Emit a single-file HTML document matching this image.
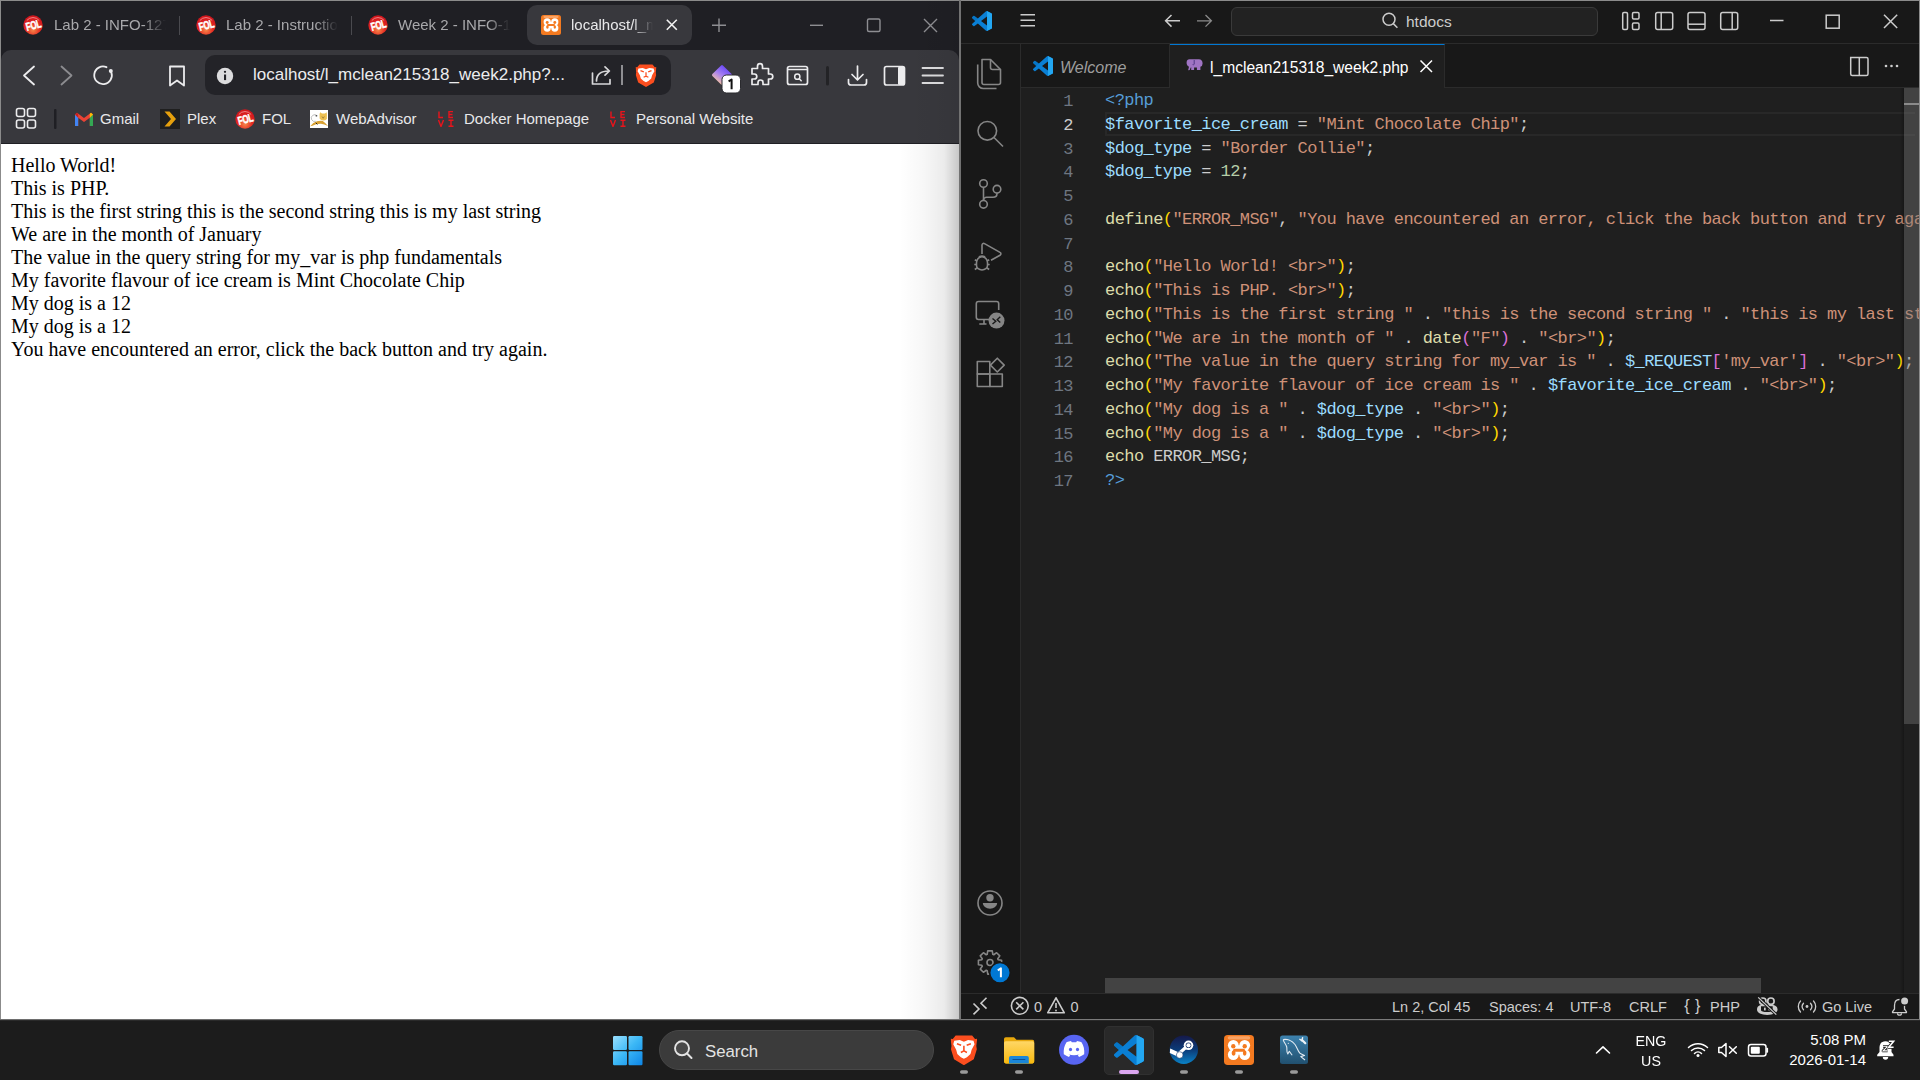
<!DOCTYPE html>
<html><head><meta charset="utf-8">
<style>
*{margin:0;padding:0;box-sizing:border-box}
html,body{width:1920px;height:1080px;overflow:hidden;background:#1c1c1c;font-family:"Liberation Sans",sans-serif}
.a{position:absolute}
svg{position:absolute;overflow:visible}
.t{position:absolute;white-space:nowrap}
/* browser */
#br{left:0;top:0;width:961px;height:1020px;background:#1f1f24;overflow:hidden}
#br .bt{color:#a8a8ab;font-size:15px}
#code .l{position:absolute;left:0;height:23.75px;line-height:23.75px;white-space:pre}
#code{font-family:"Liberation Mono",monospace;font-size:17px;letter-spacing:-0.575px;color:#cccccc}
.sb{font-size:14.5px;color:#cccccc}
.vsi{position:absolute}
.k{color:#569cd6}.v{color:#9cdcfe}.s{color:#ce9178}.n{color:#b5cea8}.f{color:#dcdcaa}.y{color:#ffd700}.p{color:#da70d6}
#gut .g{position:absolute;width:40px;text-align:right;height:23.75px;line-height:23.75px;font-family:"Liberation Mono",monospace;font-size:17px;letter-spacing:-0.575px;color:#6e7681}
</style></head><body>

<!-- ============ BROWSER ============ -->
<svg width="0" height="0" style="position:absolute">
<defs>
 <radialGradient id="folg" cx="50%" cy="75%" r="65%"><stop offset="0" stop-color="#f58a4a"/><stop offset="0.55" stop-color="#e52a22"/><stop offset="1" stop-color="#d0161c"/></radialGradient>
 <symbol id="fol" viewBox="0 0 20 20"><circle cx="10" cy="10" r="9.7" fill="url(#folg)"/><path d="M3.8 5.5 A8 8 0 0 1 16.2 5.5" stroke="#ffb0b0" stroke-width="1" fill="none" opacity=".7"/><g transform="rotate(-15 10 10)"><text x="0" y="0" font-family="Liberation Sans" font-weight="bold" font-size="11.5" fill="#fff" text-anchor="middle" letter-spacing="-.5" transform="translate(10.2 14.3) scale(.7 1)" stroke="#fff" stroke-width=".5">FOL</text></g></symbol>
 <symbol id="brave" viewBox="0 0 21 23.2" preserveAspectRatio="none"><path d="M4 0.7H17L19.3 3.4L21 3.2L20.3 8.7L20.7 11.2L18.3 18.7L10.5 23.2L2.7 18.7L0.3 11.2L0.7 8.7L0 3.2L1.7 3.4Z" fill="#fb4e1f"/><path d="M2.9 4.6L7.2 4.1L10.5 5.5L13.8 4.1L18.1 4.6L18.9 7.4L16.6 11.4L15.7 14.8L12.9 17.2L10.5 18.4L8.1 17.2L5.3 14.8L4.4 11.4L2.1 7.4Z" fill="#fff"/><path d="M5 6.9L8.3 8.1M16 6.9L12.7 8.1M10.5 8.5V12.3M8.1 13.5L10.5 12.3L12.9 13.5" fill="none" stroke="#fb4e1f" stroke-width="1.25"/></symbol>
 <symbol id="xampp" viewBox="0 0 20 20"><rect x="0" y="0" width="20" height="20" rx="2.5" fill="#f47a20"/><rect x="2.5" y="0.8" width="15" height="2.2" rx="1.1" fill="#fbb27c" opacity=".75"/><g fill="#fff"><circle cx="6.2" cy="6.9" r="3.6"/><circle cx="13.8" cy="6.9" r="3.6"/><circle cx="6.2" cy="13.1" r="3.6"/><circle cx="13.8" cy="13.1" r="3.6"/><rect x="6.2" y="6.9" width="7.6" height="6.2"/></g><g fill="#f47a20"><circle cx="6.2" cy="7.5" r="1.45"/><circle cx="13.8" cy="7.5" r="1.45"/><rect x="6" y="9.1" width="8" height="2" rx="1"/><ellipse cx="6.4" cy="12" rx="1.3" ry="1.8"/><ellipse cx="13.8" cy="12" rx="1.2" ry="1.8"/></g></symbol>
 <symbol id="levi" viewBox="0 0 18 16"><g fill="none" stroke="#e8141c" stroke-width="1.4"><path d="M2 0.5V6.5H6"/><path d="M16 0.5H12V6.5H16M12 3.5H15.5"/><path d="M1.5 9L4 15.5L6.5 9"/><path d="M11.5 9.2H16.5M14 9.2V15.2M11.5 15.2H16.5"/></g></symbol>
</defs>
</svg>
<div id="br" class="a">
  <!-- window border -->
  <div class="a" style="left:0;top:0;width:961px;height:1px;background:#8b8b8b"></div>
  <div class="a" style="left:0;top:0;width:1px;height:1020px;background:#8b8b8b"></div>
  <!-- tabs -->
  <svg style="left:23px;top:15px" width="20" height="20"><use href="#fol"/></svg>
  <div class="t bt" style="left:54px;top:16px;width:112px;overflow:hidden;-webkit-mask-image:linear-gradient(to right,#000 80%,transparent)">Lab 2 - INFO-127</div>
  <div class="a" style="left:179px;top:16px;width:1px;height:19px;background:#4a4a4f"></div>
  <svg style="left:196px;top:15px" width="20" height="20"><use href="#fol"/></svg>
  <div class="t bt" style="left:226px;top:16px;width:112px;overflow:hidden;-webkit-mask-image:linear-gradient(to right,#000 80%,transparent)">Lab 2 - Instructions</div>
  <div class="a" style="left:351px;top:16px;width:1px;height:19px;background:#4a4a4f"></div>
  <svg style="left:368px;top:15px" width="20" height="20"><use href="#fol"/></svg>
  <div class="t bt" style="left:398px;top:16px;width:112px;overflow:hidden;-webkit-mask-image:linear-gradient(to right,#000 80%,transparent)">Week 2 - INFO-1271</div>
  <div class="a" style="left:527px;top:5px;width:165px;height:40px;border-radius:10px;background:#38383d"></div>
  <svg style="left:541px;top:15px" width="20" height="20"><use href="#xampp"/></svg>
  <div class="t bt" style="left:571px;top:16px;width:82px;overflow:hidden;color:#e8e8ea;-webkit-mask-image:linear-gradient(to right,#000 75%,transparent)">localhost/l_mclean</div>
  <svg style="left:0;top:0" width="961" height="50">
    <g stroke="#f2f2f2" stroke-width="1.6" fill="none"><path d="M666.8 19.8L676.8 29.8M676.8 19.8L666.8 29.8"/></g>
    <g stroke="#8e8e92" stroke-width="1.4" fill="none">
      <path d="M719 18.5V32M712 25.2H726"/>
      <path d="M810 25.3H823"/>
      <rect x="867.5" y="19" width="12.5" height="12.5" rx="1.5"/>
      <path d="M924 19L937 32M937 19L924 32"/>
    </g>
  </svg>

  <!-- toolbar -->
  <div class="a" style="left:1px;top:50px;width:958px;height:93px;background:#38383d;border-radius:10px 10px 0 0"></div>
  <div class="a" style="left:205px;top:55px;width:466px;height:40px;border-radius:10px;background:#232328"></div>
  <div class="t" style="left:253px;top:65px;font-size:17px;color:#ececee">localhost/l_mclean215318_week2.php?...</div>
  <svg style="left:0;top:50px" width="961" height="94">
   <g transform="translate(0,-50)">
    <g fill="none" stroke-linecap="round" stroke-linejoin="round">
      <path d="M34 66.5L24 75.5L34 84.5" stroke="#ececee" stroke-width="1.8"/>
      <path d="M61.5 66.5L71.5 75.5L61.5 84.5" stroke="#8c8c90" stroke-width="1.8"/>
      <path d="M111.2 72 A8.8 8.8 0 1 1 106.5 67.2" stroke="#ececee" stroke-width="1.8"/>
      <path d="M170 66.5H184V85.5L177 80.5L170 85.5Z" stroke="#ececee" stroke-width="1.8"/>
      <path d="M592.5 73V84H610V79.5" stroke="#d8d8da" stroke-width="1.7"/>
      <path d="M596.5 81C596.5 75 600.5 71 609 71M605 66.8L609.4 71L605 75.2" stroke="#d8d8da" stroke-width="1.7"/>
      <path d="M757.5 68.5V66.2A2.5 2.5 0 0 1 762.5 66.2V68.5H768.5V74H770.3A2.5 2.5 0 0 1 770.3 79H768.5V84.5H763V82.5A2.5 2.5 0 0 0 758 82.5V84.5H752V79H754.3A2.5 2.5 0 0 0 754.3 74H752V68.5Z" stroke="#ececee" stroke-width="1.7"/>
      <rect x="787.5" y="66.5" width="20" height="18" rx="2" stroke="#ececee" stroke-width="1.7"/>
      <path d="M788 69.5H807" stroke="#ececee" stroke-width="1.5"/>
      <circle cx="797.3" cy="76.7" r="2.6" stroke="#ececee" stroke-width="1.5"/>
      <path d="M799.3 78.8L801.2 80.8" stroke="#ececee" stroke-width="1.5"/>
      <path d="M857.5 66V79.5M852 74.5L857.5 80L863 74.5M848.5 79.5V82.5A2.5 2.5 0 0 0 851 85H864A2.5 2.5 0 0 0 866.5 82.5V79.5" stroke="#ececee" stroke-width="1.7"/>
      <rect x="884.5" y="66.5" width="20" height="18.5" rx="2" stroke="#ececee" stroke-width="1.7"/>
      <path d="M922.5 68H943M922.5 75.5H943M922.5 83H943" stroke="#dcdcde" stroke-width="1.8"/>
    </g>
    <circle cx="110.8" cy="71" r="2" fill="#ececee"/>
    <rect x="898" y="66.5" width="7" height="18.5" rx="1.5" fill="#ececee"/>
    <circle cx="225" cy="76" r="8.2" fill="#dcdcde"/>
    <rect x="224" y="74.5" width="2.1" height="5.6" fill="#232328"/><circle cx="225" cy="71.8" r="1.15" fill="#232328"/>
    <rect x="621" y="65" width="2" height="20" fill="#8e8e92"/>
    <rect x="826" y="66" width="3" height="19.5" rx="1.5" fill="#232326"/>
    <!-- brave lion -->
    <use href="#brave" x="635.5" y="63.8" width="21" height="23.2"/>
    <!-- leo -->
    <defs><linearGradient id="leog" gradientUnits="userSpaceOnUse" x1="726" y1="67" x2="716" y2="82"><stop offset="0" stop-color="#6a48f8"/><stop offset="0.5" stop-color="#a67ff0"/><stop offset="1" stop-color="#f6c4a4"/></linearGradient></defs>
    <path d="M722 66.3L730.7 75L722 83.7L713.3 75Z" fill="url(#leog)" stroke="url(#leog)" stroke-width="2.6" stroke-linejoin="round"/>
    <rect x="722" y="75" width="18.5" height="18" rx="4.5" fill="#ffffff" stroke="#2a2a2e" stroke-width="1"/>
    <path d="M728.6 81.3L731.6 79.5V89.2" fill="none" stroke="#111" stroke-width="2" stroke-linejoin="round"/>
    <!-- bookmarks -->
    <g fill="none" stroke="#ececee" stroke-width="1.6">
      <rect x="16.5" y="108.5" width="8" height="8" rx="2"/><rect x="27.5" y="108.5" width="8" height="8" rx="2"/>
      <rect x="16.5" y="120" width="8" height="8" rx="2"/><rect x="27.5" y="120" width="8" height="8" rx="2"/>
    </g>
    <rect x="54" y="109" width="2.5" height="20" rx="1" fill="#1f1f24"/>
    <!-- gmail -->
    <path d="M75 114.5V126H78.2V117.7L84 122L89.8 117.7V126H93V114.5L91 112.8L84 118L77 112.8Z" fill="#ea4335"/>
    <path d="M75 114.5V126H78.2V117.7Z" fill="#4285f4"/><path d="M89.8 117.7V126H93V114.5Z" fill="#34a853"/>
    <path d="M89.8 117.7L93 114.5L91 112.8L89.8 113.8Z" fill="#fbbc04"/><path d="M75 114.5L77 112.8L78.2 113.8V117.7Z" fill="#c5221f"/>
    <!-- plex -->
    <rect x="160" y="109" width="20" height="20" fill="#1f1f1f"/>
    <path d="M164.5 111.5H169.5L176 119L169.5 126.5H164.5L171 119Z" fill="#e5a00d"/>
    <!-- tomcat -->
    <rect x="310" y="110" width="18" height="18" fill="#ffffff"/>
    <g transform="translate(310 110)">
      <path d="M5.8 11.3A3.4 3.4 0 1 1 7.2 5.8" fill="none" stroke="#b8b8b8" stroke-width=".9"/>
      <path d="M0.2 16.2Q3 12.3 7 11.2Q10 10.4 12.8 10.9Q15.3 12.6 18 16Q14 14 11 13.8Q6 13.6 2.5 15.8Z" fill="#d9a132"/>
      <path d="M9.6 3.9L10.2 2.2L12 3.4H15L16.6 2.2L16.9 4.2V9Q15.6 10.6 13.3 10.6Q10.6 10.4 9.6 8.6Z" fill="#ecc052"/>
      <path d="M12 6.5L13.2 8.3L14.3 6.5" fill="none" stroke="#8a6a2a" stroke-width=".7"/>
      <ellipse cx="6.4" cy="5.8" rx="1" ry=".65" fill="#222"/>
      <path d="M5.8 12.8L7.4 14.4" stroke="#222" stroke-width="1"/>
    </g>
  </g>
  </svg>
  <svg style="left:235px;top:109px" width="20" height="20"><use href="#fol"/></svg>
  <svg style="left:437px;top:111px" width="18" height="16"><use href="#levi"/></svg>
  <svg style="left:609px;top:111px" width="18" height="16"><use href="#levi"/></svg>

  <!-- bookmarks text -->
  <div class="t bt" style="left:100px;top:109.5px;color:#e8e8ea">Gmail</div>
  <div class="t bt" style="left:187px;top:109.5px;color:#e8e8ea">Plex</div>
  <div class="t bt" style="left:262px;top:109.5px;color:#e8e8ea">FOL</div>
  <div class="t bt" style="left:336px;top:109.5px;color:#e8e8ea">WebAdvisor</div>
  <div class="t bt" style="left:464px;top:109.5px;color:#e8e8ea">Docker Homepage</div>
  <div class="t bt" style="left:636px;top:109.5px;color:#e8e8ea">Personal Website</div>

  <!-- content -->
  <div class="a" style="left:1px;top:143px;width:958px;height:1px;background:#1f1f24"></div>
  <div class="a" style="left:1px;top:144px;width:958px;height:876px;background:#fff"></div>
  <div class="a" style="left:900px;top:0;width:59px;height:144px;background:linear-gradient(to right,rgba(0,0,0,0),rgba(0,0,0,.01) 40%,rgba(0,0,0,.03) 75%,rgba(0,0,0,.06))"></div>
  <div class="a" style="left:900px;top:144px;width:59px;height:875px;background:linear-gradient(to right,rgba(0,0,0,0),rgba(0,0,0,.03) 40%,rgba(0,0,0,.08) 75%,rgba(0,0,0,.22))"></div>
  <div class="a" style="left:959px;top:0;width:2px;height:1020px;background:#727272"></div>
  <div class="a" style="left:0;top:1019px;width:961px;height:1px;background:#6e6e6e"></div>
  <div class="a" id="pg" style="left:11px;top:154px;font-family:'Liberation Serif',serif;font-size:20px;line-height:23px;color:#000;white-space:nowrap">Hello World!<br>This is PHP.<br>This is the first string this is the second string this is my last string<br>We are in the month of January<br>The value in the query string for my_var is php fundamentals<br>My favorite flavour of ice cream is Mint Chocolate Chip<br>My dog is a 12<br>My dog is a 12<br>You have encountered an error, click the back button and try again.</div>
</div>

<!-- ============ VS CODE ============ -->
<div id="vs" class="a" style="left:961px;top:0;width:959px;height:1020px;background:#181818;overflow:hidden">
  <div class="a" style="left:0;top:0;width:959px;height:1px;background:#8b8b8b"></div>
  <div class="a" style="left:958px;top:0;width:1px;height:1020px;background:#8b8b8b"></div>
  <div class="a" style="left:0;top:1019px;width:959px;height:1px;background:#7a7a7a"></div>
  <!-- title bar bottom border -->
  <div class="a" style="left:0;top:43px;width:958px;height:1px;background:#2b2b2b"></div>
  <!-- command center -->
  <div class="a" style="left:270px;top:7px;width:367px;height:29px;border-radius:6px;background:#222222;border:1px solid #3a3a3a"></div>
  <div class="t" style="left:445px;top:12.5px;font-size:15.5px;color:#cccccc">htdocs</div>
  <!-- activity bar border -->
  <div class="a" style="left:59px;top:44px;width:1px;height:950px;background:#2b2b2b"></div>
  <!-- tabs -->
  <div class="a" style="left:60px;top:86.5px;width:898px;height:1px;background:#2b2b2b"></div>
  <div class="a" style="left:209px;top:44px;width:275px;height:44px;background:#1f1f1f;border-top:1.5px solid #0078d4;border-right:1px solid #2b2b2b"></div>
  <div class="a" style="left:208px;top:44px;width:1px;height:44px;background:#2b2b2b"></div>
  <div class="t" style="left:99px;top:58.5px;font-size:16px;color:#9d9d9d;font-style:italic">Welcome</div>
  <div class="t" style="left:249px;top:58.5px;font-size:15.6px;color:#ffffff">l_mclean215318_week2.php</div>
  <!-- editor -->
  <div class="a" style="left:60px;top:88px;width:898px;height:905px;background:#1f1f1f"></div>
  <!-- current line -->
  <div class="a" style="left:144px;top:112px;width:810px;height:24px;border:2px solid #282828;border-right:none"></div>
  <div id="gut" class="a" style="left:72px;top:90px">
    <div class="g" style="top:0">1</div>
    <div class="g" style="top:23.75px;color:#cccccc">2</div>
    <div class="g" style="top:47.5px">3</div>
    <div class="g" style="top:71.25px">4</div>
    <div class="g" style="top:95px">5</div>
    <div class="g" style="top:118.75px">6</div>
    <div class="g" style="top:142.5px">7</div>
    <div class="g" style="top:166.25px">8</div>
    <div class="g" style="top:190px">9</div>
    <div class="g" style="top:213.75px">10</div>
    <div class="g" style="top:237.5px">11</div>
    <div class="g" style="top:261.25px">12</div>
    <div class="g" style="top:285px">13</div>
    <div class="g" style="top:308.75px">14</div>
    <div class="g" style="top:332.5px">15</div>
    <div class="g" style="top:356.25px">16</div>
    <div class="g" style="top:380px">17</div>
  </div>
  <div id="code" class="a" style="left:144px;top:89px;width:814px;height:885px;overflow:hidden">
<div class="l" style="top:0"><span class="k">&lt;?php</span></div>
<div class="l" style="top:23.75px"><span class="v">$favorite_ice_cream</span> = <span class="s">"Mint Chocolate Chip"</span>;</div>
<div class="l" style="top:47.5px"><span class="v">$dog_type</span> = <span class="s">"Border Collie"</span>;</div>
<div class="l" style="top:71.25px"><span class="v">$dog_type</span> = <span class="n">12</span>;</div>
<div class="l" style="top:118.75px"><span class="f">define</span><span class="y">(</span><span class="s">"ERROR_MSG"</span>, <span class="s">"You have encountered an error, click the back button and try again."</span><span class="y">)</span>;</div>
<div class="l" style="top:166.25px"><span class="f">echo</span><span class="y">(</span><span class="s">"Hello World! &lt;br&gt;"</span><span class="y">)</span>;</div>
<div class="l" style="top:190px"><span class="f">echo</span><span class="y">(</span><span class="s">"This is PHP. &lt;br&gt;"</span><span class="y">)</span>;</div>
<div class="l" style="top:213.75px"><span class="f">echo</span><span class="y">(</span><span class="s">"This is the first string "</span> . <span class="s">"this is the second string "</span> . <span class="s">"this is my last string"</span><span class="y">)</span>;</div>
<div class="l" style="top:237.5px"><span class="f">echo</span><span class="y">(</span><span class="s">"We are in the month of "</span> . <span class="f">date</span><span class="p">(</span><span class="s">"F"</span><span class="p">)</span> . <span class="s">"&lt;br&gt;"</span><span class="y">)</span>;</div>
<div class="l" style="top:261.25px"><span class="f">echo</span><span class="y">(</span><span class="s">"The value in the query string for my_var is "</span> . <span class="v">$_REQUEST</span><span class="p">[</span><span class="s">'my_var'</span><span class="p">]</span> . <span class="s">"&lt;br&gt;"</span><span class="y">)</span>;</div>
<div class="l" style="top:285px"><span class="f">echo</span><span class="y">(</span><span class="s">"My favorite flavour of ice cream is "</span> . <span class="v">$favorite_ice_cream</span> . <span class="s">"&lt;br&gt;"</span><span class="y">)</span>;</div>
<div class="l" style="top:308.75px"><span class="f">echo</span><span class="y">(</span><span class="s">"My dog is a "</span> . <span class="v">$dog_type</span> . <span class="s">"&lt;br&gt;"</span><span class="y">)</span>;</div>
<div class="l" style="top:332.5px"><span class="f">echo</span><span class="y">(</span><span class="s">"My dog is a "</span> . <span class="v">$dog_type</span> . <span class="s">"&lt;br&gt;"</span><span class="y">)</span>;</div>
<div class="l" style="top:356.25px"><span class="f">echo</span> ERROR_MSG;</div>
<div class="l" style="top:380px"><span class="k">?&gt;</span></div>
  </div>
  <!-- scrollbars -->
  <div class="a" style="left:939px;top:88px;width:4px;height:905px;background:linear-gradient(to right,rgba(0,0,0,0),rgba(0,0,0,.28))"></div>
  <div class="a" style="left:943px;top:88px;width:15px;height:636px;background:rgba(121,121,121,.4)"></div>
  <div class="a" style="left:943px;top:103px;width:15px;height:2px;background:#8a8a8a"></div>
  <div class="a" style="left:144px;top:978px;width:656px;height:15px;background:#434343"></div>
  <!-- status bar -->
  <div class="a" style="left:0;top:993px;width:958px;height:1px;background:#2b2b2b"></div>
  <div class="t sb" style="left:73px;top:999px">0</div>
  <div class="t sb" style="left:109.5px;top:999px">0</div>
  <div class="t sb" style="left:431px;top:999px">Ln 2, Col 45</div>
  <div class="t sb" style="left:528px;top:999px">Spaces: 4</div>
  <div class="t sb" style="left:609px;top:999px">UTF-8</div>
  <div class="t sb" style="left:668px;top:999px">CRLF</div>
  <div class="t sb" style="left:749px;top:999px">PHP</div>
  <div class="t sb" style="left:861px;top:999px">Go Live</div>
</div>
<svg class="vsi" style="left:0;top:0" width="1920" height="1080">
  <defs>
    <symbol id="vsl" viewBox="0 0 100 100"><path fill="#0a7fd4" d="M96.46 10.8L75.86.87a6.23 6.23 0 0 0-7.1 1.21L29.33 38.04 12.16 25.01a4.16 4.16 0 0 0-5.32.24L1.33 30.26a4.16 4.16 0 0 0 0 6.16L16.22 50 1.33 63.58a4.16 4.16 0 0 0 0 6.16l5.51 5.01a4.16 4.16 0 0 0 5.320.24l17.17-13.03 39.43 35.96a6.23 6.23 0 0 0 7.1 1.21l20.6-9.92a6.25 6.25 0 0 0 3.54-5.63V16.43a6.25 6.25 0 0 0-3.54-5.63zM75.01 72.7L45.09 50l29.92-22.7v45.4z"/><path fill="#23a7f2" d="M75.2 0.4L96.46 10.8A6.25 6.25 0 0 1 100 16.43V83.57A6.25 6.25 0 0 1 96.46 89.2L75.2 99.6Z"/><path fill="#0065a9" opacity=".35" d="M29.33 38.04L12.16 25.01a4.16 4.16 0 0 0-5.32.24L1.33 30.26a4.16 4.16 0 0 0 0 6.16L16.22 50Z"/></symbol>
  </defs>
  <!-- title bar -->
  <use href="#vsl" x="972" y="11" width="20" height="20"/>
  <g fill="none" stroke="#cccccc" stroke-width="1.5">
    <path d="M1020.5 14.8H1035M1020.5 20.3H1035M1020.5 25.8H1035"/>
    <path d="M1171.5 15L1165.6 20.8L1171.5 26.6M1165.8 20.8H1180"/>
    <circle cx="1389" cy="19.3" r="6"/><path d="M1393.3 23.6L1397.4 27.7"/>
    <rect x="1622.7" y="12.5" width="4.8" height="17" rx="1.2"/><rect x="1632.5" y="12.5" width="6.5" height="6.5" rx="1.2"/><rect x="1632.5" y="23" width="6.5" height="6.5" rx="1.2"/>
    <rect x="1655.7" y="12.5" width="17" height="17" rx="2"/><path d="M1661.2 12.5V29.5"/>
    <rect x="1688" y="12.5" width="17" height="17" rx="2"/><path d="M1688 24.2H1705"/>
    <rect x="1720.7" y="12.5" width="17" height="17" rx="2"/><path d="M1732.2 12.5V29.5"/>
    <path d="M1770 20.5H1783.5"/>
    <rect x="1826.2" y="15.2" width="13" height="13"/>
    <path d="M1884 14.8L1897.2 28M1897.2 14.8L1884 28"/>
    <path d="M1850.7 57.5H1866.5A1.5 1.5 0 0 1 1868 59V74A1.5 1.5 0 0 1 1866.5 75.5H1852.2A1.5 1.5 0 0 1 1850.7 74Z"/><path d="M1859.3 57.5V75.5"/>
  </g>
  <path d="M1197 20.8H1211.5M1205.5 15L1211.4 20.8L1205.5 26.6" fill="none" stroke="#8b8b8b" stroke-width="1.3"/>
  <g fill="#cccccc"><circle cx="1886" cy="66" r="1.3"/><circle cx="1891.5" cy="66" r="1.3"/><circle cx="1897" cy="66" r="1.3"/></g>
  <!-- tabs -->
  <use href="#vsl" x="1033" y="56" width="20" height="20"/>
  <path d="M1420.5 60.5L1432 72M1432 60.5L1420.5 72" stroke="#ffffff" stroke-width="1.5" fill="none"/>
  <path fill="#a074c4" d="M1186.6 62.2Q1186.8 59.4 1189.5 59.3H1198.8Q1202.6 59.5 1202.6 63.6Q1202.6 66.2 1200.4 66.8V70.1H1196.9V67.6H1194.1V70.1H1191.2V67.3Q1190.5 67.5 1190.3 68.5L1190 69.6Q1189.3 70.6 1188.2 70L1189 66.8Q1186.4 65.5 1186.6 62.2Z"/>
  <path d="M1194.2 60V64.3Q1193.8 65 1192.6 64.6" stroke="#4a3280" stroke-width="0.9" fill="none"/>
  <!-- activity bar -->
  <g fill="none" stroke="#868686" stroke-width="1.6" stroke-linejoin="round">
    <path d="M982 59.5H990.5L1000.5 69.5V82.5A2 2 0 0 1 998.5 84.5H984A2 2 0 0 1 982 82.5Z"/><path d="M990.5 59.5V67.5A2 2 0 0 0 992.5 69.5H1000.5"/>
    <path d="M977.7 64.5V83A5.5 5.5 0 0 0 983.2 88.5H996.5"/>
    <circle cx="987.3" cy="130.8" r="9.3"/><path d="M994 137.5L1003 146.5"/>
    <circle cx="983.5" cy="183.5" r="3.8"/><circle cx="983.5" cy="204.3" r="3.8"/><circle cx="997" cy="189.2" r="3.8"/>
    <path d="M983.5 187.3V200.5"/><path d="M997 193V193.5C997 196 995.5 197.3 993 197.3H986.5C985 197.3 983.5 198.5 983.5 200"/>
    <path d="M982 254V245.2C982 243.8 983.3 243 984.5 243.6L1000 252.4C1001.2 253 1001.2 254.5 1000 255.2L991 260.3"/>
    <path d="M976.5 262.8A5.5 6 0 0 1 987.5 262.8V265.5A5.5 4.5 0 0 1 976.5 265.5Z"/>
    <path d="M979 257.5C979.5 255.5 984.5 255.5 985 257.5M974.8 259.7L977 261M989.2 259.7L987 261M974.3 264.5H976.5M987.5 264.5H989.7M974.8 269.5L977 268M989.2 269.5L987 268"/>
    <path d="M989 319.5H978.5A2.2 2.2 0 0 1 976.3 317.3V303.7A2.2 2.2 0 0 1 978.5 301.5H996.5A2.2 2.2 0 0 1 998.7 303.7V310"/><path d="M984 320V323.7M979.3 324H986.5"/>
    <rect x="977.3" y="361.5" width="12.5" height="12.5"/><rect x="977.3" y="374" width="12.5" height="12.5"/><rect x="989.8" y="374" width="12.5" height="12.5"/>
    <path d="M997.3 358.2L1004.2 365.1L997.3 372L990.4 365.1Z"/>
    <circle cx="990" cy="903" r="12"/>
    <path stroke-linejoin="round" d="M998.13 959.70 L1001.58 960.25 L1001.58 964.75 L998.13 965.30 L997.73 966.27 L999.78 969.10 L996.60 972.28 L993.77 970.23 L992.80 970.63 L992.25 974.08 L987.75 974.08 L987.20 970.63 L986.23 970.23 L983.40 972.28 L980.22 969.10 L982.27 966.27 L981.87 965.30 L978.42 964.75 L978.42 960.25 L981.87 959.70 L982.27 958.73 L980.22 955.90 L983.40 952.72 L986.23 954.77 L987.20 954.37 L987.75 950.92 L992.25 950.92 L992.80 954.37 L993.77 954.77 L996.60 952.72 L999.78 955.90 L997.73 958.73Z"/>
    <circle cx="990" cy="962.5" r="3"/>
  </g>
  <circle cx="996.5" cy="320.6" r="8" fill="#868686"/>
  <path d="M992.5 318.5L995.8 321.2L992.5 324M1000.3 316.8L997.2 319.7L1000.3 322.5" stroke="#181818" stroke-width="1.4" fill="none"/>
  <g fill="#868686"><circle cx="990" cy="897.8" r="3.7"/><path d="M982.8 903H997.2A7.2 5.8 0 0 1 982.8 903Z"/></g>
  <circle cx="1000" cy="972.7" r="10.3" fill="#0078d4" stroke="#181818" stroke-width="1.5"/>
  <path d="M997.8 970.3L1000.9 968.3V977.3" fill="none" stroke="#fff" stroke-width="2" stroke-linejoin="round"/>
  <!-- status bar -->
  <g fill="none" stroke="#cccccc" stroke-width="1.6">
    <path d="M973.5 1003.5L979 1009L973.5 1014.3M986.5 997.8L981 1003.2L986.5 1008.6"/>
    <circle cx="1019.8" cy="1005.8" r="8.4"/><path d="M1016.2 1002.2L1023.4 1009.4M1023.4 1002.2L1016.2 1009.4"/>
    <path d="M1056 997.8L1064.3 1012.8H1047.7Z" stroke-linejoin="round"/><path d="M1056 1003V1008"/>
  </g>
  <circle cx="1056" cy="1010.5" r=".9" fill="#cccccc"/>
  <text x="1684.2" y="1011.3" font-family="Liberation Sans" font-size="16" fill="#cccccc">{</text>
  <text x="1695" y="1011.3" font-family="Liberation Sans" font-size="16" fill="#cccccc">}</text>
  <!-- copilot off -->
  <path d="M1757 1009.6C1757 1005.6 1760 1004.6 1767 1004.6C1774 1004.6 1777.5 1005.6 1777.5 1009.6C1777.5 1013 1773 1015 1767.2 1015C1761.4 1015 1757 1013 1757 1009.6Z" fill="#cccccc"/>
  <circle cx="1762.8" cy="1001.2" r="3.2" fill="#181818" stroke="#cccccc" stroke-width="1.7"/>
  <circle cx="1770.9" cy="1001.2" r="3.2" fill="#181818" stroke="#cccccc" stroke-width="1.7"/>
  <path d="M1761 1006.3H1772.7V1010C1772.7 1011.5 1770 1012 1766.8 1012C1763.6 1012 1761 1011.5 1761 1010Z" fill="#181818"/>
  <rect x="1764" y="1007.6" width="1.7" height="2.8" fill="#cccccc"/><rect x="1768.4" y="1007.6" width="1.7" height="2.8" fill="#cccccc"/>
  <path d="M1758.2 997.4L1776.3 1014.6" stroke="#181818" stroke-width="3"/>
  <path d="M1758.2 997.4L1776.3 1014.6" stroke="#cccccc" stroke-width="1.3"/>
  <!-- broadcast -->
  <g fill="none" stroke="#cccccc" stroke-width="1.3" stroke-linecap="round">
    <path d="M1800.5 1001A8 8 0 0 0 1800.5 1012M1813.5 1001A8 8 0 0 1 1813.5 1012"/>
    <path d="M1803.5 1003.3A4.8 4.8 0 0 0 1803.5 1009.7M1810.5 1003.3A4.8 4.8 0 0 1 1810.5 1009.7"/>
  </g>
  <circle cx="1807" cy="1006.5" r="1.4" fill="#cccccc"/>
  <!-- bell -->
  <path d="M1899.5 999.5C1895.5 999.5 1894.5 1002.5 1894.5 1005.5V1009L1892.5 1011.8V1012.6H1906.5V1011.8L1904.5 1009V1005.5" fill="none" stroke="#cccccc" stroke-width="1.3" stroke-linejoin="round"/>
  <path d="M1897.5 1013.2A2 2 0 0 0 1901.5 1013.2" fill="none" stroke="#cccccc" stroke-width="1.2"/>
  <circle cx="1904.6" cy="1001" r="4.8" fill="#181818"/>
  <circle cx="1904.6" cy="1001" r="3.5" fill="#cccccc"/>
</svg>

<!-- ============ TASKBAR ============ -->
<div id="tb" class="a" style="left:0;top:1020px;width:1920px;height:60px;background:#1c1c1c">
  <div class="a" style="left:0;top:0;width:1920px;height:1px;background:#2a2a2a"></div>
  <div class="a" style="left:659px;top:10px;width:275px;height:40px;border-radius:20px;background:#3b3b3b;border:1px solid #474747"></div>
  <div class="t" style="left:705px;top:21.5px;font-size:16.8px;color:#e4e4e4">Search</div>
  <div class="a" style="left:1104px;top:5.5px;width:50px;height:49px;border-radius:5px;background:#292929;border:1px solid #303030"></div>
  <div class="t" style="left:1630px;top:11px;font-size:15px;color:#ffffff;text-align:center;width:42px;line-height:20px;transform:scaleX(.95)">ENG<br>US</div>
  <div class="t" style="left:1766px;top:10px;font-size:15px;color:#ffffff;text-align:right;width:100px;line-height:20px">5:08 PM<br>2026-01-14</div>
</div>
<svg class="vsi" style="left:0;top:0" width="1920" height="1080">
  <defs>
    <linearGradient id="wing" gradientUnits="userSpaceOnUse" x1="613" y1="1036" x2="642" y2="1065"><stop offset="0" stop-color="#9ae0fe"/><stop offset=".5" stop-color="#3cb8f6"/><stop offset="1" stop-color="#0e86e6"/></linearGradient>
    <linearGradient id="steamg" x1="0" y1="0" x2="0" y2="1"><stop offset="0" stop-color="#15194a"/><stop offset=".5" stop-color="#0b3b78"/><stop offset="1" stop-color="#0a83c8"/></linearGradient>
    <linearGradient id="mysg" x1="0" y1="0" x2="0" y2="1"><stop offset="0" stop-color="#3d82ae"/><stop offset="1" stop-color="#21506f"/></linearGradient>
    <linearGradient id="foldg" x1="0" y1="0" x2="0" y2="1"><stop offset="0" stop-color="#ffd766"/><stop offset="1" stop-color="#f8b90f"/></linearGradient>
  </defs>
  <!-- windows logo -->
  <g fill="url(#wing)">
    <rect x="613" y="1036" width="14" height="14" rx="1.2"/><rect x="628.5" y="1036" width="14" height="14" rx="1.2"/>
    <rect x="613" y="1051.3" width="14" height="14" rx="1.2"/><rect x="628.5" y="1051.3" width="14" height="14" rx="1.2"/>
  </g>
  <!-- search icon -->
  <circle cx="682" cy="1048.3" r="7" fill="#4a4a4a" stroke="#e4e4e4" stroke-width="1.9"/>
  <path d="M687 1053.5L691.5 1058" stroke="#e4e4e4" stroke-width="2" stroke-linecap="round"/>
  <!-- brave -->
  <use href="#brave" x="950.6" y="1034.6" width="26.6" height="30.6"/>
  <!-- files -->
  <path d="M1004 1039A1.8 1.8 0 0 1 1005.8 1037.2H1014L1016.5 1039.8H1032.5A1.8 1.8 0 0 1 1034.2 1041.6V1061.6A1.8 1.8 0 0 1 1032.5 1063.4H1005.8A1.8 1.8 0 0 1 1004 1061.6Z" fill="#e8a80c"/>
  <path d="M1004 1043A1.8 1.8 0 0 1 1005.8 1041.2H1032.5A1.8 1.8 0 0 1 1034.2 1043V1061.6A1.8 1.8 0 0 1 1032.5 1063.4H1005.8A1.8 1.8 0 0 1 1004 1061.6Z" fill="url(#foldg)"/>
  <path d="M1009 1063.4V1057.8A1.8 1.8 0 0 1 1010.8 1056H1027A1.8 1.8 0 0 1 1028.8 1057.8V1063.4Z" fill="#1a86d8"/>
  <path d="M1012.5 1059.5H1025.3" stroke="#0b4f94" stroke-width="1"/>
  <!-- discord -->
  <circle cx="1074" cy="1049.8" r="15" fill="#5865f2"/>
  <path d="M1066.5 1042.2C1068.2 1041.4 1069.8 1041 1071 1040.9L1071.8 1042.3C1073.3 1042.1 1074.7 1042.1 1076.2 1042.3L1077 1040.9C1078.2 1041 1079.8 1041.4 1081.5 1042.2C1083.8 1045.6 1084.6 1049.6 1084.2 1054.3C1082.5 1055.6 1080.8 1056.4 1079 1056.9L1077.8 1055C1078.6 1054.7 1079.2 1054.4 1079.8 1054C1076 1055.8 1072 1055.8 1068.2 1054C1068.8 1054.4 1069.4 1054.7 1070.2 1055L1069 1056.9C1067.2 1056.4 1065.5 1055.6 1063.8 1054.3C1063.4 1049.6 1064.2 1045.6 1066.5 1042.2Z" fill="#fff"/>
  <ellipse cx="1070.5" cy="1049.5" rx="1.6" ry="1.8" fill="#5865f2"/><ellipse cx="1077.5" cy="1049.5" rx="1.6" ry="1.8" fill="#5865f2"/>
  <!-- vscode -->
  <use href="#vsl" x="1114" y="1035" width="30" height="30"/>
  <rect x="1119" y="1070" width="20" height="4" rx="2" fill="#dba6f0"/>
  <!-- steam -->
  <circle cx="1183.8" cy="1049.8" r="14.2" fill="url(#steamg)"/>
  <path d="M1170.2 1048.6L1179 1052.6L1178 1056.8L1169.8 1053Z" fill="#fff"/>
  <path d="M1179 1053.5L1186.8 1046.5" stroke="#fff" stroke-width="3.2"/>
  <circle cx="1188.5" cy="1045.3" r="4.8" fill="#fff"/><circle cx="1188.5" cy="1045.3" r="2.8" fill="#1b3a6e"/><circle cx="1188.5" cy="1045.3" r="2.1" fill="#fff"/>
  <circle cx="1179.7" cy="1055" r="3.3" fill="#fff" stroke="#1b3a6e" stroke-width=".6"/>
  <!-- xampp -->
  <use href="#xampp" x="1224" y="1035" width="30" height="30"/>
  <!-- mysql -->
  <rect x="1280" y="1035.5" width="28" height="28.5" rx="2.5" fill="url(#mysg)"/>
  <path d="M1283.2 1039.6C1287 1038.8 1292 1040.5 1295 1044.5C1297.5 1048 1297.8 1051.5 1300 1053.2C1302 1054.5 1303.5 1054.8 1304.5 1055.5L1300.8 1056.6L1305 1060M1283.2 1039.8C1283.5 1042 1285.5 1043.5 1286.6 1046.5C1287.5 1049 1286 1051.5 1287.8 1054L1289.3 1051.3L1292.2 1055.3" stroke="#e2ebf3" stroke-width="1.1" fill="none" stroke-linejoin="round"/>
  <circle cx="1288.3" cy="1043.3" r=".6" fill="#e2ebf3"/>
  <path d="M1302.3 1040.2L1305.3 1043.2" stroke="#eef3f7" stroke-width="2.2" stroke-linecap="round"/>
  <path d="M1299.8 1039.3L1301.8 1040.8L1302.6 1037.8" stroke="#eef3f7" stroke-width="1.4" fill="none" stroke-linecap="round"/>
  <!-- running dots -->
  <g fill="#9a9a9a"><rect x="960" y="1070.3" width="8" height="3.4" rx="1.7"/><rect x="1015" y="1070.3" width="8" height="3.4" rx="1.7"/><rect x="1180" y="1070.3" width="8" height="3.4" rx="1.7"/><rect x="1235" y="1070.3" width="8" height="3.4" rx="1.7"/><rect x="1290" y="1070.3" width="8" height="3.4" rx="1.7"/></g>
  <!-- tray -->
  <path d="M1596.5 1053L1603 1046.8L1609.5 1053" stroke="#fff" stroke-width="1.6" fill="none" stroke-linecap="round" stroke-linejoin="round"/>
  <g fill="none" stroke="#fff" stroke-width="1.5" stroke-linecap="round">
    <path d="M1688.5 1047.5A14 14 0 0 1 1707.5 1047.5"/>
    <path d="M1691.5 1050.5A9.5 9.5 0 0 1 1704.5 1050.5"/>
    <path d="M1694.5 1053.5A5 5 0 0 1 1701.5 1053.5"/>
    <path d="M1718.8 1047.5H1721.5L1726 1043.5V1056.5L1721.5 1052.5H1718.8Z" stroke-linejoin="round"/>
    <path d="M1729.5 1046.8L1736.3 1053.3M1736.3 1046.8L1729.5 1053.3"/>
    <rect x="1748.5" y="1044.5" width="17.5" height="11.5" rx="2.5"/>
  </g>
  <circle cx="1698" cy="1055.5" r="1.5" fill="#fff"/>
  <rect x="1766.3" y="1047.8" width="1.8" height="5" rx=".8" fill="#fff"/>
  <rect x="1750.8" y="1046.8" width="9" height="7" rx="1" fill="#fff"/>
  <path d="M1885.5 1041.3C1880.5 1041.3 1879.5 1045 1879.5 1048.5V1052L1877.2 1054.8V1056.3H1893.5V1054.8L1891.5 1052V1048.5C1891.5 1045 1890.5 1041.3 1885.5 1041.3Z" fill="#fff"/>
  <path d="M1882.8 1057A2.7 2.7 0 0 0 1888.2 1057Z" fill="#fff"/>
  <path d="M1883 1046.3H1887.6L1883 1050.9H1887.6" stroke="#1c1c1c" stroke-width="2.8" fill="none" stroke-linejoin="round"/>
  <path d="M1883 1046.3H1887.6L1883 1050.9H1887.6" stroke="#fff" stroke-width="1.1" fill="none"/>
  <path d="M1888.8 1041.3H1893.6L1888.8 1047.2H1893.6" stroke="#1c1c1c" stroke-width="3.2" fill="none" stroke-linejoin="round"/>
  <path d="M1888.8 1041.3H1893.6L1888.8 1047.2H1893.6" stroke="#fff" stroke-width="1.6" fill="none"/>
</svg>

</body></html>
